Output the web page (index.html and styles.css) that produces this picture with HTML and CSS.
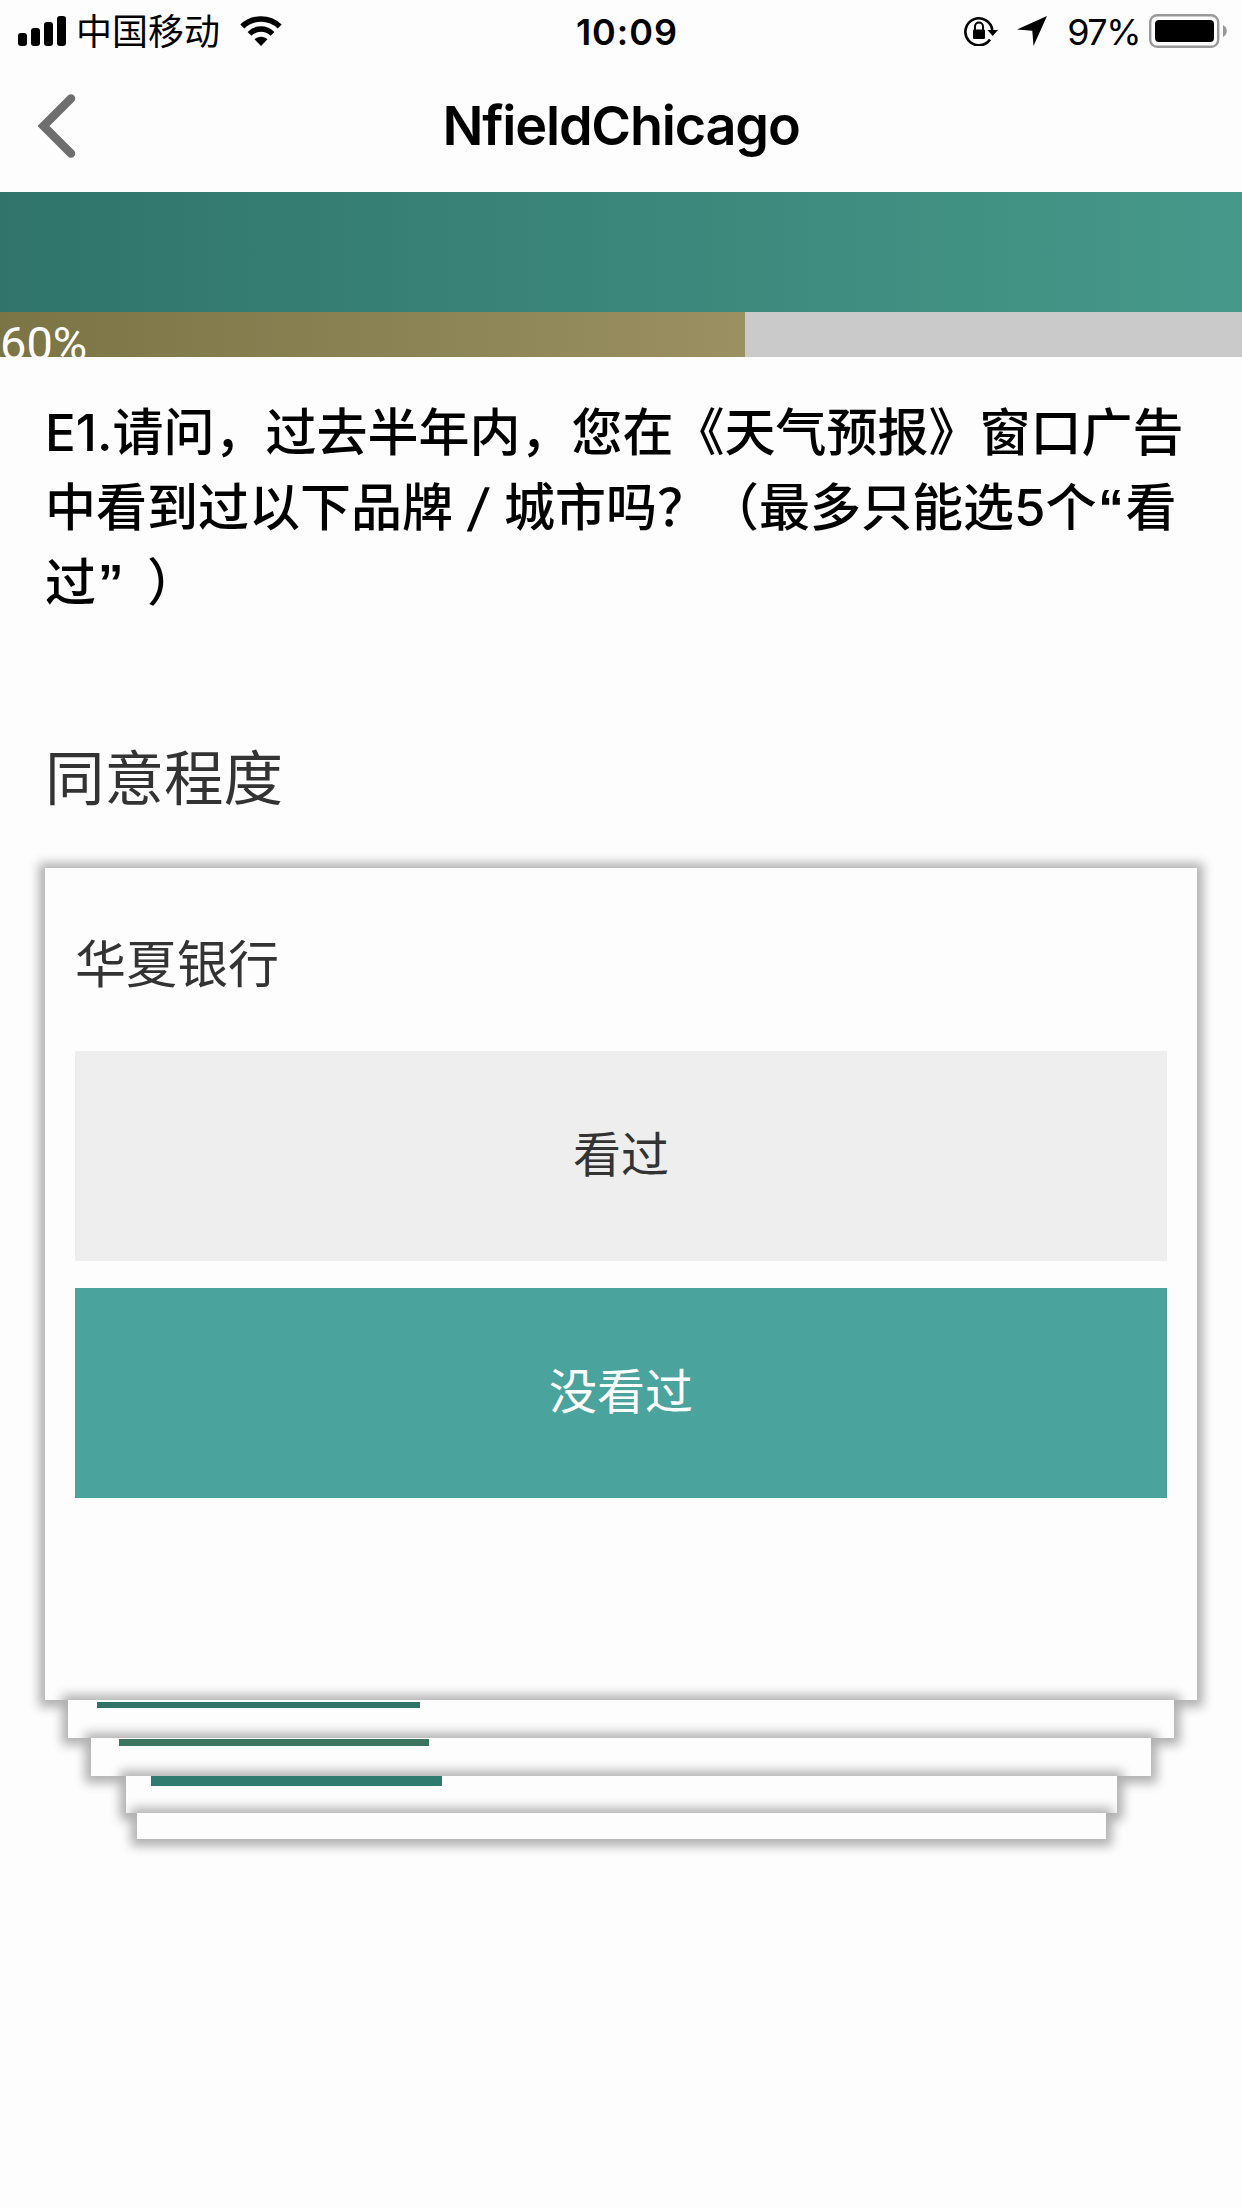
FILE: index.html
```
<!DOCTYPE html>
<html lang="zh-CN">
<head>
  <meta charset="UTF-8">
  <meta name="viewport" content="width=device-width, initial-scale=1.0">
  <title>NfieldChicago</title>
  <link rel="stylesheet" href="styles.css">
</head>
<body>
  <!-- Status Bar -->
  <div class="status-bar">
    <div class="status-left">
      <svg class="signal" width="48" height="30" viewBox="0 0 48 30">
        <rect x="0" y="17" width="9" height="13" rx="3"/>
        <rect x="13" y="12" width="9" height="18" rx="3"/>
        <rect x="26" y="6" width="9" height="24" rx="3"/>
        <rect x="39" y="0" width="9" height="30" rx="3"/>
      </svg>
      <span class="carrier">中国移动</span>
      <svg class="wifi" width="42" height="30" viewBox="0 0 42 30">
        <path d="M2.3 10.6C12.5 0.5 29.5 0.5 39.7 10.6" fill="none" stroke="#000" stroke-width="5.6"/>
        <path d="M9.5 17.8C16 11.4 26 11.4 32.5 17.8" fill="none" stroke="#000" stroke-width="5.4"/>
        <path d="M14.5 23.3C18 19.9 24 19.9 27.5 23.3L21 30Z"/>
      </svg>
    </div>
    <div class="time">10:09</div>
    <div class="status-right">
      <svg class="lock" width="34" height="30" viewBox="0 0 34 30">
        <path d="M26 23.5A13.5 13.5 0 1 1 28.3 14" fill="none" stroke="#000" stroke-width="2.6"/>
        <path d="M23.5 14H34L28.7 20Z"/>
        <rect x="9" y="13.5" width="12" height="9.5" rx="1.2"/>
        <path d="M11 14V10.5A4 4 0 0 1 19 10.5V14" fill="none" stroke="#000" stroke-width="2"/>
      </svg>
      <svg class="location" width="30" height="30" viewBox="0 0 30 30">
        <path d="M30 0L16.5 30L15.3 14.8L0 13.5Z"/>
      </svg>
      <span class="percent">97%</span>
      <svg class="battery" width="78" height="34" viewBox="0 0 78 34">
        <rect x="1.2" y="1.2" width="68" height="31.6" rx="7" fill="none" stroke="#999" stroke-width="2.4"/>
        <rect x="6" y="6" width="59" height="22" rx="4"/>
        <path d="M74 11C79 13.5 79 20.5 74 23Z" fill="#999"/>
      </svg>
    </div>
  </div>

  <!-- Navigation -->
  <div class="nav">
    <svg class="back" width="38" height="64" viewBox="0 0 38 64">
      <path d="M33 4.5L5.5 32L33 59.5" fill="none" stroke="#6e6e6e" stroke-width="8.5" stroke-linecap="round"/>
    </svg>
    <h1>NfieldChicago</h1>
  </div>

  <div class="banner"></div>
  <div class="progress">
    <div class="progress-fill" style="width: 60%">60%</div>
  </div>

  <!-- Question -->
  <div class="content">
    <h2>E1.请问，过去半年内，您在《天气预报》窗口广告<br>中看到过以下品牌<span class="slash">/</span>城市吗？（最多只能选5个<span class="quote">“</span>看<br>过<span class="quote close">”</span>）</h2>
    <h3>同意程度</h3>

    <!-- Card stack, back to front -->
    <div class="stack">
      <div class="under under-4"></div>
      <div class="under under-3"><div class="edge"></div></div>
      <div class="under under-2"><div class="edge"></div></div>
      <div class="under under-1"><div class="edge"></div></div>
      <div class="card">
        <p>华夏银行</p>
        <div class="option">看过</div>
        <div class="option selected">没看过</div>
      </div>
    </div>
  </div>
</body>
</html>
```

FILE: styles.css
```
/* General Reset */
* {
  margin: 0;
  padding: 0;
  box-sizing: border-box;
}

body {
  min-height: 2208px;
  background-color: #fdfdfd;
  color: #000;
  font-family: Inter, "Noto Sans CJK SC", sans-serif;
  overflow: hidden;
}

svg {
  display: block;
  flex: none;
}

/* Status Bar */
.status-bar {
  display: grid;
  grid-template-columns: 1fr auto 1fr;
  align-items: center;
  height: 60px;
  padding: 0 15px 0 18px;
  font-size: 36px;
  line-height: 60px;
}

.status-left,
.status-right {
  display: flex;
  align-items: center;
}

.status-right {
  justify-content: flex-end;
}

.carrier {
  margin: 0 20px 0 10px;
  padding-top: 2px;
}

.time {
  font-weight: 600;
  letter-spacing: 1px;
  padding: 1px 0 0 9px;
}

.location {
  margin: 0 20px 0 19px;
}

.percent {
  padding-top: 1px;
  margin-right: 9px;
  letter-spacing: -1.5px;
}

/* Navigation */
.nav {
  display: grid;
  grid-template-columns: 38px 1fr 38px;
  align-items: center;
  height: 132px;
  padding: 0 38px;
}

.nav h1 {
  text-align: center;
  font-size: 54px;
  font-weight: 600;
  line-height: 132px;
  letter-spacing: -1.2px;
}

/* Banner and Progress */
.banner {
  height: 120px;
  background: linear-gradient(to right, #30746b, #46998a);
}

.progress {
  height: 45px;
  background-color: #cacaca;
  overflow: hidden;
}

.progress-fill {
  height: 45px;
  padding-top: 4px;
  background: linear-gradient(to right, #7b7445, #9a9062);
  color: #fff;
  font-family: Roboto, sans-serif;
  font-size: 47px;
  line-height: 55px;
}

/* Question */
.content {
  padding: 38px 45px 0;
}

.content h2 {
  font-size: 51px;
  font-weight: 500;
  line-height: 75px;
  white-space: nowrap;
  text-spacing-trim: space-all;
}

.slash {
  display: inline-block;
  width: 51px;
  text-align: center;
  transform: skewX(-8deg);
}

.quote {
  display: inline-block;
  width: 29px;
  font-family: "Liberation Sans", sans-serif;
  font-weight: 700;
  line-height: 60px;
  text-align: center;
}

.quote.close {
  width: 51px;
  padding-left: 2px;
  text-align: left;
}

.content h3 {
  margin-top: 120px;
  color: #333;
  font-size: 59.5px;
  font-weight: 400;
  line-height: 76px;
}

/* Card Stack */
.stack {
  display: flex;
  flex-direction: column-reverse;
  align-items: center;
  margin-top: 52px;
}

.card,
.under {
  background-color: #fdfdfd;
  box-shadow: 0 1px 10px 6px #b0b0b0;
}

.card {
  width: 1152px;
  height: 832px;
  padding: 59px 30px 0;
  color: #333;
}

.card p {
  font-size: 51px;
  line-height: 76px;
  margin-bottom: 48px;
}

.option {
  display: flex;
  align-items: center;
  justify-content: center;
  height: 210px;
  padding-bottom: 10px;
  margin-bottom: 27px;
  background-color: #eee;
  font-size: 48px;
}

.option.selected {
  background-color: #4aa39c;
  color: #fff;
}

.under {
  height: 38px;
}

.under-1 {
  width: 1106px;
  padding: 2px 29px 0;
}

.under-2 {
  width: 1060px;
  padding: 1px 28px 0;
}

.under-3 {
  width: 991px;
  height: 37px;
  padding: 0 25px;
}

.under-4 {
  width: 969px;
  height: 26px;
}

/* Top borders showing above the card shadows */
.edge {
  position: relative;
  z-index: 1;
  width: 323px;
  height: 6px;
  background-color: #2f7467;
}

.under-2 .edge {
  width: 310px;
  height: 7px;
  background-color: #3b755f;
}

.under-3 .edge {
  width: 291px;
  height: 10px;
  background-color: #2f7b6f;
}
```
